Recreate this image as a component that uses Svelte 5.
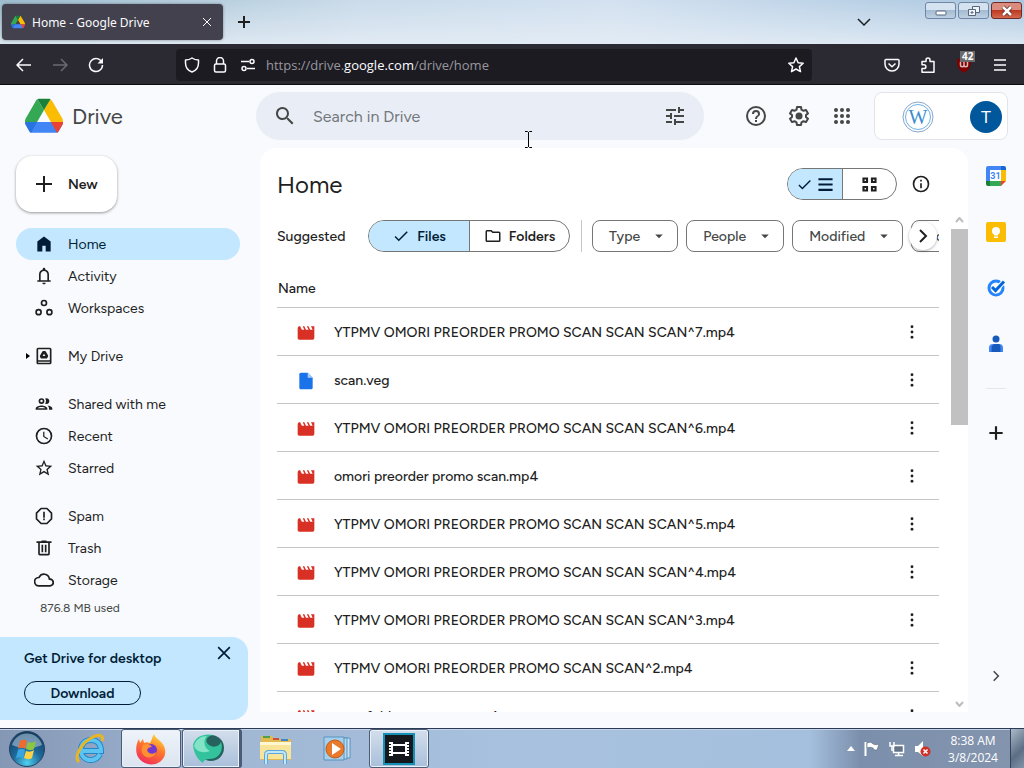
<script>
  const files = [
    { name: 'YTPMV OMORI PREORDER PROMO SCAN SCAN SCAN^7.mp4', kind: 'video' },
    { name: 'scan.veg', kind: 'file' },
    { name: 'YTPMV OMORI PREORDER PROMO SCAN SCAN SCAN^6.mp4', kind: 'video' },
    { name: 'omori preorder promo scan.mp4', kind: 'video' },
    { name: 'YTPMV OMORI PREORDER PROMO SCAN SCAN SCAN^5.mp4', kind: 'video' },
    { name: 'YTPMV OMORI PREORDER PROMO SCAN SCAN SCAN^4.mp4', kind: 'video' },
    { name: 'YTPMV OMORI PREORDER PROMO SCAN SCAN SCAN^3.mp4', kind: 'video' },
    { name: 'YTPMV OMORI PREORDER PROMO SCAN SCAN^2.mp4', kind: 'video' },
    { name: 'scan folder promo sc.mp4', kind: 'video' }
  ];

  const navGroups = [
    ['Home', 'Activity', 'Workspaces'],
    ['My Drive'],
    ['Shared with me', 'Recent', 'Starred'],
    ['Spam', 'Trash', 'Storage']
  ];

  const filters = ['Type', 'People', 'Modified', 'Location'];

  let current = $state('Home');
  let suggested = $state('Files');
  let view = $state('list');
  let query = $state('');
</script>

{#snippet driveLogo(size)}
  <svg width={size} height={size} viewBox="0 0 88 80" aria-hidden="true">
    <path fill="#4285f4" d="M16 79h56c3 0 5-1 6-3l10-19-1-3H1l-1 3 10 19c1 2 3 3 6 3z" />
    <path fill="#34a853" d="M44 26 29 1c-2 1-3 2-4 4L1 47c-1 2-1 5-1 7h28z" />
    <path fill="#fbbc04" d="M44 26 59 1l4 4 24 42c1 2 1 5 1 7H60z" />
    <path fill="#188038" d="M44 26 59 1c-1-1-3-1-5-1H34c-2 0-4 0-5 1z" />
    <path fill="#ea4335" d="M60 54h28c0 2 0 4-1 6l-9 15c-1 2-2 3-4 4z" />
    <path fill="#1967d2" d="M28 54 14 79c-2-1-3-2-4-4L1 60c-1-2-1-4-1-6z" opacity=".6" />
  </svg>
{/snippet}

{#snippet icon(name)}
  <svg class="icon" viewBox="0 0 24 24" aria-hidden="true">
    {#if name == 'Home'}
      <path d="M4 21V9l8-6 8 6v12h-6v-7h-4v7z" />
    {:else if name == 'Activity'}
      <path d="M4 19v-2h2v-7c0-2.800 1.700-5.200 4.500-5.800V3.500a1.500 1.500 0 0 1 3 0v.7C16.300 4.800 18 7.200 18 10v7h2v2zm8 3c-1.100 0-2-.9-2-2h4c0 1.100-.9 2-2 2zm-4-5h8v-7c0-2.200-1.800-4-4-4s-4 1.800-4 4z" />
    {:else if name == 'Workspaces'}
      <g fill="none" stroke="currentColor" stroke-width="2"><circle cx="12" cy="6" r="3" /><circle cx="5.500" cy="17" r="3" /><circle cx="18.500" cy="17" r="3" /></g>
    {:else if name == 'My Drive'}
      <path d="M19 2H5a2 2 0 0 0-2 2v16c0 1.100.9 2 2 2h14a2 2 0 0 0 2-2V4a2 2 0 0 0-2-2zm0 18H5v-1h14zm0-3H5V4h14zM9.200 15h5.600c.5 0 .9-.2 1.100-.7l1-1.700c.2-.4.200-.9 0-1.300l-2.900-4.900A1.500 1.500 0 0 0 12.800 6h-1.600c-.5 0-1 .3-1.200.7l-2.900 4.900c-.2.400-.2.900 0 1.300l1 1.700c.2.300.6.4 1.100.4zm1.200-3L12 9.300l1.600 2.700z" />
    {:else if name == 'Shared with me'}
      <path d="M9 13.800c-2.300 0-7 1.200-7 3.500V19h14v-1.700c0-2.300-4.700-3.500-7-3.500zM4.300 17c.8-.6 2.800-1.300 4.700-1.300s3.900.7 4.700 1.300zM9 12a3.500 3.500 0 1 0 0-7 3.500 3.500 0 0 0 0 7zm0-5a1.500 1.500 0 1 1 0 3 1.500 1.500 0 0 1 0-3zm7 6.800c1.200.8 2 2 2 3.500V19h4v-1.700c0-2-3.500-3.200-6-3.500zM15 12a3.500 3.500 0 1 0-1.500-6.700 5.500 5.500 0 0 1 0 6.300c.4.300.9.400 1.500.4z" />
    {:else if name == 'Recent'}
      <path d="M12 2a10 10 0 1 0 0 20 10 10 0 0 0 0-20zm0 18a8 8 0 1 1 0-16 8 8 0 0 1 0 16zm.5-13H11v6l5.200 3.200.8-1.300-4.500-2.700z" />
    {:else if name == 'Starred'}
      <path d="m22 9.200-7.200-.6L12 2 9.200 8.600 2 9.200l5.500 4.800L5.800 21l6.200-3.700 6.200 3.700-1.600-7zm-10 6.200-3.800 2.300 1-4.300L5.900 10.500l4.400-.4L12 6.100l1.700 4 4.400.4-3.300 2.900 1 4.300z" />
    {:else if name == 'Spam'}
      <path d="M8.500 3h7L21 8.500v7L15.500 21h-7L3 15.500v-7z" fill="none" stroke="currentColor" stroke-width="2" stroke-linejoin="round" /><path d="M11 7h2v7h-2zM11 15h2v2h-2z" />
    {:else if name == 'Trash'}
      <path d="M15 4V3H9v1H3v2h2v13a2 2 0 0 0 2 2h10a2 2 0 0 0 2-2V6h2V4zm2 15H7V6h10zM9 8h2v9H9zm4 0h2v9h-2z" />
    {:else if name == 'Storage'}
      <path d="M19.400 10a7.500 7.500 0 0 0-14-2A6 6 0 0 0 6 20h13a5 5 0 0 0 .4-10zM19 18H6a4 4 0 0 1-.4-8l1-.1.600-1a5.500 5.500 0 0 1 10.200 1.500l.3 1.500 1.500.1A3 3 0 0 1 19 18z" />
    {:else if name == 'search'}
      <path d="M15.500 14h-.8l-.3-.3a6.500 6.500 0 1 0-.7.700l.3.300v.8l5 5 1.500-1.500zm-6 0a4.500 4.500 0 1 1 0-9 4.500 4.500 0 0 1 0 9z" />
    {:else if name == 'tune'}
      <path d="M3 17v2h6v-2zM3 5v2h10V5zm10 16v-2h8v-2h-8v-2h-2v6zM7 9v2H3v2h4v2h2V9zm14 4v-2H11v2zm-6-4h2V7h4V5h-4V3h-2z" />
    {:else if name == 'help'}
      <path d="M11 18h2v-2h-2zm1-16a10 10 0 1 0 0 20 10 10 0 0 0 0-20zm0 18a8 8 0 1 1 0-16 8 8 0 0 1 0 16zm0-14a4 4 0 0 0-4 4h2a2 2 0 1 1 4 0c0 2-3 1.800-3 5h2c0-2.300 3-2.500 3-5a4 4 0 0 0-4-4z" />
    {:else if name == 'settings'}
      <path d="M10 3h4l.5 2.700 2 1.100L19 5.900l2 3.500-2 1.700v1.900l2 1.700-2 3.400-2.500-.9-2 1.200L14 21h-4l-.5-2.600-2-1.200-2.500.9-2-3.400L5 13v-1.900L3 9.400l2-3.500 2.500.9 2-1.100z" fill="none" stroke="currentColor" stroke-width="2" stroke-linejoin="round" /><circle cx="12" cy="12" r="3.500" />
    {:else if name == 'apps'}
      {#each [6, 12, 18] as y}
        {#each [6, 12, 18] as x}<circle cx={x} cy={y} r="2" />{/each}
      {/each}
    {:else if name == 'plus'}
      <path d="M11 4h2v7h7v2h-7v7h-2v-7H4v-2h7z" />
    {:else if name == 'add'}
      <path d="M12 4v16M4 12h16" fill="none" stroke="currentColor" stroke-width="2.600" />
    {:else if name == 'check'}
      <path d="m9 16.200-4.200-4.200-1.400 1.400L9 19 21 7l-1.400-1.400z" />
    {:else if name == 'folder'}
      <path d="M9.200 6l2 2H20v10H4V6zM10 4H4a2 2 0 0 0-2 2v12c0 1.100.9 2 2 2h16a2 2 0 0 0 2-2V8a2 2 0 0 0-2-2h-8z" />
    {:else if name == 'list'}
      <path d="M2 3h20v3H2zM2 10.500h20v3H2zM2 18h20v3H2z" />
    {:else if name == 'grid'}
      <path d="M3.500 3.500h5v5h-5zM15.500 3.500h5v5h-5zM3.500 15.500h5v5h-5zM15.500 15.500h5v5h-5z" fill="none" stroke="currentColor" stroke-width="3" />
    {:else if name == 'info'}
      <path d="M11 7h2v2h-2zm0 4h2v6h-2zm1-9a10 10 0 1 0 0 20 10 10 0 0 0 0-20zm0 18a8 8 0 1 1 0-16 8 8 0 0 1 0 16z" />
    {:else if name == 'caret'}
      <path d="m7 10 5 5 5-5z" />
    {:else if name == 'chevron'}
      <path d="m8 4 8 8-8 8" fill="none" stroke="currentColor" stroke-width="2.600" />
    {:else if name == 'close'}
      <path d="m5 5 14 14M19 5 5 19" fill="none" stroke="currentColor" stroke-width="2" />
    {:else if name == 'more'}
      <circle cx="12" cy="5.700" r="1.700" /><circle cx="12" cy="12" r="1.700" /><circle cx="12" cy="18.300" r="1.700" />
    {:else if name == 'video'}
      <path fill="#d93025" d="m18 4 2 4h-3l-2-4h-2l2 4h-3l-2-4H8l2 4H7L5 4H4a2 2 0 0 0-2 2v12c0 1.100.9 2 2 2h16a2 2 0 0 0 2-2V4z" />
    {:else if name == 'file'}
      <path fill="#1a73e8" d="M14 2H6a2 2 0 0 0-2 2v16c0 1.100.9 2 2 2h12a2 2 0 0 0 2-2V8z" /><path fill="#a9cbfa" d="M14 2v6h6z" />
    {/if}
  </svg>
{/snippet}

<div class="desktop">
  <div class="tabstrip">
    <div class="tab">
      {@render driveLogo(14)}
      <span class="tab-title">Home - Google Drive</span>
      <button class="tab-close" aria-label="Close tab">
        <svg width="10" height="10" viewBox="0 0 10 10"><path d="m1 1 8 8M9 1 1 9" /></svg>
      </button>
    </div>
    <button class="new-tab" aria-label="New tab">
      <svg width="12" height="12" viewBox="0 0 12 12"><path d="M6 0v12M0 6h12" /></svg>
    </button>
    <button class="all-tabs" aria-label="List all tabs">
      <svg width="14" height="8" viewBox="0 0 14 8"><path d="m1 1 6 6 6-6" /></svg>
    </button>
    <div class="window-buttons">
      <button aria-label="Minimize">
        <svg width="16" height="12" viewBox="0 0 16 12"><rect x="3" y="6" width="10" height="4" rx="1" fill="#fff" stroke="#56657a" /></svg>
      </button>
      <button aria-label="Restore">
        <svg width="14" height="14" viewBox="0 0 14 14"><g fill="#eef4fa" stroke="#56657a"><path d="M5.500 2.500h7v6h-7z" /><path d="M1.500 5.500h7v6h-7z" /><path d="M4 8h2v1H4z" /></g></svg>
      </button>
      <button class="win-close" aria-label="Close">
        <svg width="14" height="12" viewBox="0 0 14 12"><path d="m3 2 8 8M11 2l-8 8" fill="none" stroke="#5d2a26" stroke-width="4" /><path d="m3 2 8 8M11 2l-8 8" fill="none" stroke="#fff" stroke-width="2.500" /></svg>
      </button>
    </div>
  </div>

  <div class="toolbar">
    <div class="nav-buttons">
      <button aria-label="Back"><svg viewBox="0 0 16 16"><path d="M15 8H1.500M7 2 1 8l6 6" /></svg></button>
      <button aria-label="Forward" disabled><svg viewBox="0 0 16 16"><path d="M1 8h13.500M9 2l6 6-6 6" /></svg></button>
      <button aria-label="Reload"><svg viewBox="0 0 16 16"><path d="M14 5.500A6.500 6.500 0 1 0 14.500 8" /><path d="M15 1v5.500H9.500z" fill="currentColor" stroke="none" /></svg></button>
    </div>
    <div class="urlbar">
      <svg viewBox="0 0 16 16"><path d="M8 1c2 1.500 4 2 6.500 2v3c0 4-2 7.500-6.500 9C3.500 13.500 1.500 10 1.500 6V3C4 3 6 2.500 8 1z" /></svg>
      <svg viewBox="0 0 16 16"><rect x="2.500" y="7" width="11" height="8" rx="1.500" /><path d="M4.500 7V4a3.500 3.500 0 0 1 7 0v3" /></svg>
      <svg viewBox="0 0 16 16"><path d="M1 4.500h8M7 11.500h8" /><circle cx="12" cy="4.500" r="2" /><circle cx="4" cy="11.500" r="2" /></svg>
      <span class="url">https://drive.<b>google.com</b>/drive/home</span>
      <svg viewBox="0 0 16 16"><path d="m8 1 2.100 4.700 5.100.5-3.800 3.400 1.100 5L8 12l-4.500 2.600 1.100-5L.8 6.200l5.100-.5z" /></svg>
    </div>
    <div class="extensions">
      <button aria-label="Save to Pocket"><svg viewBox="0 0 16 16"><path d="M2 2.500h12c.6 0 1 .4 1 1V7c0 4-3 7-7 7s-7-3-7-7V3.500c0-.6.400-1 1-1z" /><path d="m4.500 6.500 3.500 3.300 3.500-3.300" /></svg></button>
      <button aria-label="Extensions"><svg viewBox="0 0 16 16"><path d="M2 15.200h12V4.500h-4V3a2 2 0 0 0-4 0v1.500H2v3.300h2a1.900 1.900 0 0 1 0 3.800H2z" /></svg></button>
      <button class="ublock" aria-label="uBlock Origin">
        <svg viewBox="0 0 16 16"><path d="M8 0c2 2 5 2 7 2 0 7-1 10-7 14C2 12 1 9 1 2c2 0 5 0 7-2z" fill="#800000" stroke="none" /><path d="M4.500 5v3a1.700 1.700 0 0 0 3.500 0V5v3a1.700 1.700 0 0 0 3.500 0V5" stroke="#d9b8b8" /></svg>
        <span class="count">42</span>
      </button>
      <button aria-label="Menu"><svg viewBox="0 0 16 16"><path d="M2 3h12M2 8h12M2 13h12" /></svg></button>
    </div>
  </div>

  <div class="drive">
    <header>
      <a class="brand" href="#home">{@render driveLogo(38)}<span>Drive</span></a>
      <form class="search" role="search">
        <button type="button" aria-label="Search">{@render icon('search')}</button>
        <input type="text" placeholder="Search in Drive" aria-label="Search in Drive" bind:value={query} />
        <button type="button" aria-label="Advanced search">{@render icon('tune')}</button>
        <svg class="pointer" width="9" height="17" viewBox="0 0 9 17" aria-hidden="true"><path d="M1 .5h2.500l1 1 1-1H8M4.500 1v15M1 16.500h2.500l1-1 1 1H8" /></svg>
      </form>
      <div class="header-actions">
        <button aria-label="Support">{@render icon('help')}</button>
        <button aria-label="Settings">{@render icon('settings')}</button>
        <button aria-label="Google apps">{@render icon('apps')}</button>
      </div>
      <div class="account">
        <svg width="32" height="32" viewBox="0 0 32 32" aria-hidden="true">
          <g fill="none" stroke="#87a5ce"><circle cx="16" cy="16" r="15" /><circle cx="16" cy="16" r="12.500" stroke="#6fb1e4" /></g>
          <text x="16" y="23" text-anchor="middle" font-family="Liberation Serif, serif" font-size="20" fill="#3b8bd0">W</text>
        </svg>
        <button class="avatar" aria-label="Account">T</button>
      </div>
    </header>

    <div class="body">
      <aside>
        <button class="new">{@render icon('plus')}New</button>
        <nav>
          {#each navGroups as group}
            <ul>
              {#each group as item}
                <li>
                  <a href="#{item}" class:active={current == item} onclick={() => (current = item)}>
                    <span class="expand">{#if item == 'My Drive'}<svg width="4" height="6" viewBox="0 0 4 6"><path d="m0 0 4 3-4 3z" /></svg>{/if}</span>
                    {@render icon(item)}
                    {item}
                  </a>
                </li>
              {/each}
            </ul>
          {/each}
        </nav>
        <p class="quota">876.8 MB used</p>
        <div class="promo">
          <div class="promo-text">
            <h2>Get Drive for desktop</h2>
            <button class="download">Download</button>
          </div>
          <button class="dismiss" aria-label="Dismiss">{@render icon('close')}</button>
        </div>
      </aside>

      <main>
        <div class="title-row">
          <h1>Home</h1>
          <div class="segmented view-switch">
            <button class:on={view == 'list'} aria-label="List layout" onclick={() => (view = 'list')}>
              {#if view == 'list'}{@render icon('check')}{/if}
              {@render icon('list')}
            </button>
            <button class:on={view == 'grid'} aria-label="Grid layout" onclick={() => (view = 'grid')}>{@render icon('grid')}</button>
          </div>
          <button class="details" aria-label="View details">{@render icon('info')}</button>
        </div>

        <div class="scroller">
          <div class="content">
            <div class="filters">
              <span class="label">Suggested</span>
              <div class="segmented suggest">
                <button class:on={suggested == 'Files'} onclick={() => (suggested = 'Files')}>{@render icon('check')}Files</button>
                <button class:on={suggested == 'Folders'} onclick={() => (suggested = 'Folders')}>{@render icon('folder')}Folders</button>
              </div>
              <div class="chips">
                {#each filters as filter}
                  <button class="chip">{filter}{@render icon('caret')}</button>
                {/each}
              </div>
              <button class="scroll-chips" aria-label="More filters">{@render icon('chevron')}</button>
            </div>

            <table>
              <thead>
                <tr><th colspan="3">Name</th></tr>
              </thead>
              <tbody>
                {#each files as file}
                  <tr>
                    <td class="kind">{@render icon(file.kind)}</td>
                    <td class="name">{file.name}</td>
                    <td class="menu"><button aria-label="More actions">{@render icon('more')}</button></td>
                  </tr>
                {/each}
              </tbody>
            </table>
          </div>
          <div class="scrollbar" aria-hidden="true">
            <svg width="9" height="6" viewBox="0 0 9 6"><path d="m1 5 3.500-4L8 5" /></svg>
            <div class="track"><div class="thumb"></div></div>
            <svg width="9" height="6" viewBox="0 0 9 6"><path d="m1 1 3.500 4L8 1" /></svg>
          </div>
        </div>
      </main>

      <div class="side-panel">
        <button aria-label="Calendar">
          <svg width="20" height="20" viewBox="0 0 20 20">
            <path fill="#4285f4" d="M2 0h13v4H4v11H0V2a2 2 0 0 1 2-2z" /><path fill="#1967d2" d="M15 0h3a2 2 0 0 1 2 2v2h-5z" /><path fill="#fbbc04" d="M15 4h5v11h-5z" /><path fill="#34a853" d="M4 15h11v5H4z" /><path fill="#188038" d="M0 15h4v5H2a2 2 0 0 1-2-2z" /><path fill="#ea4335" d="M15 15h5l-5 5z" /><path fill="#fff" d="M4 4h11v11H4z" />
            <text x="9.500" y="13" text-anchor="middle" font-family="Roboto, sans-serif" font-size="9" font-weight="700" fill="#4285f4">31</text>
          </svg>
        </button>
        <button aria-label="Keep">
          <svg width="20" height="20" viewBox="0 0 20 20"><rect width="20" height="20" rx="2" fill="#fbbc04" /><circle cx="10" cy="9" r="4" fill="#fff" /><path fill="#fff" d="M8 12h4v1.500H8zM8 14.500h4V16H8z" /></svg>
        </button>
        <button aria-label="Tasks">
          <svg width="20" height="20" viewBox="0 0 20 20"><circle cx="10" cy="10" r="7" fill="none" stroke="#2684fc" stroke-width="3" /><path d="m6.500 9.500 3 3 8-8.500" fill="none" stroke="#fff" stroke-width="5" /><path d="m6 9 3.500 3.500L18 3.500" fill="none" stroke="#0066da" stroke-width="3" /></svg>
        </button>
        <button aria-label="Contacts">
          <svg width="20" height="20" viewBox="0 0 20 20"><circle cx="10" cy="5" r="3.500" fill="#185abc" /><path fill="#4285f4" d="M3 18v-4a4 4 0 0 1 4-4h6a4 4 0 0 1 4 4v4z" /><path fill="#185abc" d="M5.500 18v-3a5 5 0 0 1 3-5H13a4 4 0 0 1 1.500 3.500V18z" /></svg>
        </button>
        <hr />
        <button class="addons" aria-label="Get add-ons">{@render icon('add')}</button>
        <button class="hide-panel" aria-label="Hide side panel">{@render icon('chevron')}</button>
      </div>
    </div>
  </div>

  <div class="taskbar">
    <button class="start" aria-label="Start">
      <svg width="38" height="38" viewBox="0 0 38 38">
        <defs>
          <radialGradient id="orb" cx=".5" cy=".9" r=".9"><stop offset="0" stop-color="#4fd0ee" /><stop offset=".45" stop-color="#1f6a9c" /><stop offset="1" stop-color="#123a5e" /></radialGradient>
        </defs>
        <circle cx="19" cy="19" r="17.500" fill="url(#orb)" stroke="#27415f" />
        <path d="M4 15a15.500 15.500 0 0 1 30 0c-8 4-22 4-30 0z" fill="#c9dcec" opacity=".5" />
        <path fill="#ef6a2e" d="M12 11c3-2 5-1 7 0l-2 8c-2-1-4-2-7 0z" />
        <path fill="#8cc63e" d="M20 12c3 1 5 1 8-1l-2 8c-3 2-5 1-8 0z" />
        <path fill="#38a4e0" d="M10 20c3-2 5-1 7 0l-2 8c-2-1-4-1-7 0z" />
        <path fill="#fcd245" d="M18 21c3 1 5 1 8-1l-2 8c-3 2-5 1-8 0z" />
      </svg>
    </button>
    <button class="task ie" aria-label="Internet Explorer">
      <svg width="32" height="32" viewBox="0 0 32 32">
        <path d="M26 21c-2 4-5 6-9 6-6 0-10-4-10-10S11 7 17 7s10 4 10 11H8" fill="none" stroke="#2386c8" stroke-width="6" />
        <path d="M26 21c-2 4-5 6-9 6-6 0-10-4-10-10S11 7 17 7s10 4 10 11H8" fill="none" stroke="#5dc4f1" stroke-width="4" />
        <path d="M5 29C-1 24 8 9 19 4c6-3 11-2 9 4" fill="none" stroke="#e8b523" stroke-width="3" />
      </svg>
    </button>
    <button class="task running front" aria-label="Firefox">
      <svg width="32" height="32" viewBox="0 0 32 32">
        <defs><linearGradient id="fox" x1=".8" y1="0" x2=".3" y2="1"><stop offset="0" stop-color="#ffe33f" /><stop offset=".45" stop-color="#ff7a2a" /><stop offset="1" stop-color="#f02c5c" /></linearGradient></defs>
        <path fill="url(#fox)" d="M19 1c1 4 5 5 8 9 5 6 4 14-1 18-7 6-18 4-23-4C0 18 1 11 4 6l1 4 3-4 1 4c2-1 4-1 6 0 2-3 2-6 4-9z" />
        <circle cx="16" cy="17" r="6" fill="#7338d0" /><path fill="#ff9130" d="M8 12c4-2 7-1 9 2-3 0-4 1-5 3 1 4 6 5 9 2-1 6-10 8-14 1-1-3 0-6 1-8z" />
      </svg>
    </button>
    <button class="task running stacked" aria-label="Bird app">
      <svg width="32" height="32" viewBox="0 0 32 32">
        <circle cx="18" cy="15" r="13" fill="#26635f" />
        <path fill="#33c39c" d="M0 12C2 3 12 0 20 2c-5 1-8 4-6 8 5 6 12 4 14-1 3 8-2 17-11 17-4 0-6 1-7 4C4 26 1 20 0 12z" />
        <path fill="#82e3c6" d="M1 13C3 6 8 3 14 3c-5 5-2 13 3 15-8 3-14 0-16-5z" />
      </svg>
    </button>
    <button class="task" aria-label="Windows Explorer">
      <svg width="34" height="32" viewBox="0 0 34 32">
        <path fill="#e2b84f" d="M2 3h11l2 3h17v21H2z" /><path fill="#4ea04a" d="M4 3h7v2H4z" /><path fill="#c9503c" d="M14 5h6v2h-6z" /><path fill="#3f86c6" d="M22 6h7v2h-7z" />
        <path fill="#f8e59a" d="M1 9h31v17H1z" /><path fill="#fff7cf" d="M1 9h31v3H1z" />
        <path fill="none" stroke="#5ba8dc" stroke-width="4" d="M7 31v-9c0-2 1-3 3-3h13c2 0 3 1 3 3v9" /><path fill="none" stroke="#c1e6fa" stroke-width="2" d="M7 31v-9c0-2 1-3 3-3h13c2 0 3 1 3 3v9" />
      </svg>
    </button>
    <button class="task" aria-label="Windows Media Player">
      <svg width="28" height="28" viewBox="0 0 28 28">
        <path fill="#cce4f4" stroke="#5692be" d="M9 3h18v20H9z" /><path fill="#b3d8f0" stroke="#5692be" d="M6 3h18v21H6z" /><path fill="#a5d0ed" stroke="#5692be" d="M1 2h20v23H1z" />
        <circle cx="12" cy="14" r="9" fill="#e9792b" stroke="#c25c1c" /><path fill="#fff" d="m9 8 9 6-9 6z" />
      </svg>
    </button>
    <button class="task running vegas" aria-label="VEGAS">
      <svg width="32" height="32" viewBox="0 0 32 32">
        <path fill="#15191e" stroke="#1590b5" stroke-width="2" d="M1 1h30v30H1z" />
        <path fill="none" stroke="#fff" stroke-width="2" d="M9 12h14v8H9z" /><path fill="none" stroke="#fff" stroke-width="4" stroke-dasharray="2 1" d="M8 9v14M24 9v14" />
      </svg>
    </button>
    <div class="tray">
      <svg width="8" height="5" viewBox="0 0 8 5"><path fill="#fff" d="m4 0 4 5H0z" /></svg>
      <svg width="16" height="16" viewBox="0 0 16 16"><path d="M1.500 1v14" stroke="#fff" stroke-width="2" /><path fill="#fff" stroke="#46566a" stroke-width=".5" d="M3 2c3-1 4-1 6 1 2 1 4 1 6 0l-2 6c-2 0-3 0-4-2-2-1-4-1-6 0z" /></svg>
      <svg width="16" height="16" viewBox="0 0 16 16"><path d="M4.500 4.500h10v7h-10zM9.500 12v3M6 14.500h8" fill="#64758a" stroke="#fff" stroke-width="1.500" /><path d="M1 1v4h4V1M3 5v5" fill="none" stroke="#fff" stroke-width="1.500" /></svg>
      <svg width="17" height="16" viewBox="0 0 17 16"><path fill="#fff" d="M1 5h3l5-5v15l-5-4H1z" /><circle cx="11.500" cy="10.500" r="5" fill="#cf3028" /><path d="m9.500 8.500 4 4M13.500 8.500l-4 4" stroke="#fff" stroke-width="1.500" /></svg>
      <div class="clock"><span>8:38 AM</span><span>3/8/2024</span></div>
    </div>
    <button class="show-desktop" aria-label="Show desktop"></button>
  </div>
</div>

<style>
  :global(body) {
    margin: 0;
  }

  .desktop {
    display: flex;
    flex-direction: column;
    height: 100vh;
    overflow: hidden;
    font-family: "Open Sans", "Noto Sans", sans-serif;
    color: #1f1f1f;
  }

  button {
    display: flex;
    align-items: center;
    justify-content: center;
    padding: 0;
    border: 0;
    background: none;
    color: inherit;
    font: inherit;
    cursor: pointer;
  }

  svg {
    display: block;
    flex: none;
  }

  .icon {
    width: 20px;
    height: 20px;
    fill: currentColor;
  }

  /* browser chrome */
  .tabstrip {
    display: flex;
    flex: none;
    height: 44px;
    background: linear-gradient(to bottom, rgba(255, 255, 255, 0), rgba(230, 238, 246, 0.8)), linear-gradient(to right, #9dbdce, #cadbea 35%, #d3e1f0 60%, #a9c6df);
  }

  .tab {
    display: flex;
    align-items: center;
    gap: 7px;
    width: 221px;
    height: 36px;
    margin: 4px 0 0 2px;
    padding: 0 11px 0 9px;
    box-sizing: border-box;
    border-radius: 4px;
    background: #42414d;
    box-shadow: 0 0 3px rgba(0, 0, 0, 0.4);
    color: #fbfbfe;
    font-family: "Noto Sans", "Open Sans", sans-serif;
    font-size: 12px;
  }

  .tab-title {
    flex: 1;
  }

  .tab-close,
  .new-tab,
  .all-tabs {
    fill: none;
    stroke: currentColor;
  }

  .new-tab {
    margin-left: 15px;
    stroke-width: 2;
  }

  .all-tabs {
    margin-left: auto;
    margin-right: 54px;
    stroke-width: 1.5;
  }

  .window-buttons {
    display: flex;
    gap: 2px;
    margin: 2px 2px 0 0;
  }

  .window-buttons button {
    width: 31px;
    height: 17px;
    border: 1px solid #6f87a4;
    border-radius: 3px;
    box-sizing: border-box;
    background: linear-gradient(to bottom, #d5e2ef 45%, #a5bbd3 50%, #bfd0e2);
  }

  .window-buttons .win-close {
    border-color: #6d2a29;
    background: linear-gradient(to bottom, #dc8c7d 45%, #bd3a22 50%, #d4694d);
  }

  .toolbar {
    display: flex;
    flex: none;
    align-items: center;
    height: 41px;
    padding-top: 1px;
    box-sizing: border-box;
    border-bottom: 1px solid #0c0c0d;
    background: #2b2a33;
    color: #fbfbfe;
  }

  .toolbar svg {
    width: 16px;
    height: 16px;
    fill: none;
    stroke: currentColor;
    stroke-width: 1.5;
    stroke-linejoin: round;
  }

  .nav-buttons,
  .extensions {
    display: flex;
    gap: 20px;
    padding: 0 16px;
  }

  .nav-buttons button:disabled {
    color: #6a6973;
  }

  .urlbar {
    display: flex;
    flex: 1;
    align-items: center;
    gap: 12px;
    height: 32px;
    margin: 0 56px;
    padding: 0 8px;
    border-radius: 4px;
    background: #1c1b22;
  }

  .url {
    flex: 1;
    margin-left: -2px;
    color: #98979f;
    font-size: 13px;
  }

  .url b {
    color: #fbfbfe;
    font-weight: 400;
  }

  .ublock {
    position: relative;
  }

  .ublock .count {
    position: absolute;
    top: -6px;
    left: 4px;
    padding: 0 2px;
    background: #6b6b6b;
    font-size: 10px;
    font-weight: 700;
    line-height: 11px;
  }

  /* drive page */
  .drive {
    display: flex;
    flex: 1;
    flex-direction: column;
    min-height: 0;
    background: #f8fafd;
    font-family: Figtree, Inter, Roboto, sans-serif;
    font-size: 14px;
  }

  header {
    display: flex;
    flex: none;
    align-items: flex-start;
    height: 63px;
    padding: 7px 16px 0 0;
    box-sizing: border-box;
    color: #444746;
  }

  .brand {
    display: flex;
    align-items: center;
    gap: 9px;
    width: 256px;
    height: 48px;
    padding-left: 25px;
    box-sizing: border-box;
    color: #444746;
    font-size: 22px;
    text-decoration: none;
  }

  .search {
    position: relative;
    display: flex;
    flex: 1;
    align-items: center;
    gap: 16px;
    height: 48px;
    padding: 0 17px;
    border-radius: 24px;
    background: #e9eef6;
  }

  .search .icon,
  .header-actions .icon {
    width: 24px;
    height: 24px;
  }

  .search input {
    flex: 1;
    min-width: 0;
    padding: 0;
    border: 0;
    outline: 0;
    background: none;
    color: #1f1f1f;
    font: inherit;
    font-size: 16px;
  }

  .search input::placeholder {
    color: #74777b;
  }

  .search .pointer {
    position: absolute;
    top: 39px;
    left: 268px;
    fill: none;
    stroke: #000;
  }

  .header-actions {
    display: flex;
    align-items: center;
    gap: 19px;
    height: 48px;
    padding: 0 20px 0 40px;
  }

  .account {
    display: flex;
    align-items: center;
    justify-content: flex-end;
    gap: 36px;
    width: 134px;
    height: 48px;
    padding: 1px 5px 0 0;
    box-sizing: border-box;
    border: 1px solid #e1e5ea;
    border-radius: 8px;
    background: #fff;
  }

  .avatar {
    width: 32px;
    height: 32px;
    border-radius: 50%;
    background: #01579b;
    color: #fff;
    font-size: 18px;
  }

  .body {
    display: flex;
    flex: 1;
    min-height: 0;
  }

  aside {
    display: flex;
    flex: none;
    flex-direction: column;
    width: 248px;
    margin-right: 12px;
    padding: 8px 0;
    box-sizing: border-box;
  }

  .new {
    justify-content: flex-start;
    gap: 12px;
    width: 101px;
    height: 56px;
    margin: 0 0 16px 16px;
    padding-left: 16px;
    border-radius: 16px;
    background: #fff;
    box-shadow: 0 1px 3px rgba(0, 0, 0, 0.4);
    font-weight: 600;
  }

  .new .icon {
    width: 24px;
    height: 24px;
  }

  nav {
    display: flex;
    flex-direction: column;
    gap: 16px;
    padding: 0 8px 0 16px;
  }

  ul {
    margin: 0;
    padding: 0;
    list-style: none;
  }

  nav a {
    display: flex;
    align-items: center;
    height: 32px;
    border-radius: 16px;
    color: #1f1f1f;
    text-decoration: none;
  }

  nav a .icon {
    margin-right: 14px;
  }

  nav a.active {
    background: #c2e7ff;
    color: #001d35;
  }

  .expand {
    display: flex;
    width: 8px;
    padding-left: 10px;
  }

  .quota {
    margin: 4px 0 0 40px;
    color: #444746;
    font-size: 12px;
    line-height: 16px;
  }

  .promo {
    display: flex;
    align-items: flex-start;
    justify-content: space-between;
    height: 83px;
    margin-top: auto;
    padding: 12px 14px 0 24px;
    box-sizing: border-box;
    border-radius: 0 16px 16px 0;
    background: #c2e7ff;
    color: #001d35;
  }

  .promo h2 {
    margin: 0 0 12px;
    font-size: 14px;
    font-weight: 600;
    line-height: 20px;
  }

  .download {
    width: 117px;
    height: 24px;
    border: 1px solid #001d35;
    border-radius: 12px;
    font-weight: 600;
  }

  .dismiss {
    margin-top: -6px;
  }

  main {
    display: flex;
    flex: 1;
    flex-direction: column;
    min-width: 0;
    margin-bottom: 16px;
    border-radius: 16px 16px 0 0;
    background: #fff;
  }

  .title-row {
    display: flex;
    flex: none;
    align-items: center;
    height: 64px;
    padding: 8px 37px 0 17px;
    box-sizing: border-box;
  }

  h1 {
    flex: 1;
    margin: 0;
    font-size: 24px;
    font-weight: 400;
  }

  .segmented {
    display: flex;
    height: 32px;
    box-sizing: border-box;
    border: 1px solid #747775;
    border-radius: 16px;
    overflow: hidden;
  }

  .segmented button + button {
    border-left: 1px solid #747775;
  }

  .segmented .on {
    background: #c2e7ff;
    color: #001d35;
  }

  .view-switch button {
    width: 54px;
    gap: 4px;
  }

  .view-switch .icon {
    width: 17px;
    height: 17px;
  }

  .details {
    margin-left: 14px;
  }

  .scroller {
    display: flex;
    flex: 1;
    min-height: 0;
  }

  .content {
    flex: 1;
    min-width: 0;
    padding: 8px 12px 0 17px;
    overflow: hidden;
  }

  .filters {
    position: relative;
    display: flex;
    align-items: center;
    height: 32px;
    font-weight: 500;
  }

  .filters .icon {
    width: 18px;
    height: 18px;
  }

  .label {
    width: 91px;
    flex: none;
  }

  .suggest {
    flex: none;
    font-weight: 600;
  }

  .suggest button {
    gap: 7px;
    width: 100px;
  }

  .chips {
    display: flex;
    flex: 1;
    gap: 8px;
    min-width: 0;
    height: 32px;
    margin-left: 11px;
    padding-left: 10px;
    border-left: 1px solid #c4c7c5;
    overflow: hidden;
  }

  .chip {
    flex: none;
    gap: 10px;
    height: 32px;
    padding: 0 9px 0 16px;
    box-sizing: border-box;
    border: 1px solid #747775;
    border-radius: 8px;
    color: #444746;
  }

  .scroll-chips {
    position: absolute;
    top: 2px;
    right: 2px;
    width: 28px;
    height: 28px;
    border-radius: 50%;
    background: #fff;
    box-shadow: 0 1px 3px rgba(0, 0, 0, 0.3);
  }

  table {
    width: 100%;
    margin-top: 16px;
    border-collapse: collapse;
    font-weight: 500;
  }

  th {
    height: 37px;
    padding: 2px 1px 0;
    text-align: left;
    font-weight: 500;
  }

  td {
    height: 47px;
    padding: 0;
  }

  tr {
    border-bottom: 1px solid #c4c7c5;
  }

  .kind,
  .name {
    height: 45px;
    padding-top: 2px;
  }

  .kind {
    width: 57px;
  }

  .kind .icon {
    margin-left: 19px;
  }

  .menu {
    width: 37px;
  }

  .scrollbar {
    display: flex;
    flex: none;
    flex-direction: column;
    align-items: center;
    width: 17px;
    padding: 5px 0;
    fill: none;
    stroke: #bdbdbd;
    stroke-width: 2;
  }

  .track {
    flex: 1;
    width: 100%;
    margin: 6px 0;
  }

  .thumb {
    height: 42%;
    background: #c1c1c1;
  }

  .side-panel {
    display: flex;
    flex: none;
    flex-direction: column;
    align-items: center;
    gap: 36px;
    width: 56px;
    padding: 18px 0 44px;
    box-sizing: border-box;
  }

  .side-panel hr {
    width: 20px;
    margin: -2px 0;
    border: 0;
    border-top: 1px solid #e4e7eb;
  }

  .hide-panel {
    margin-top: auto;
    color: #444746;
  }

  .hide-panel .icon {
    width: 14px;
    height: 16px;
  }

  /* windows taskbar */
  .taskbar {
    display: flex;
    flex: none;
    height: 40px;
    box-sizing: border-box;
    border-top: 1px solid #2c3a55;
    background: linear-gradient(to right, #8497b5, #a0b6d3 20%, #a7c1de 50%, #a5c0de 79%, #7b8fac 84%, #8494ad);
    box-shadow: inset 0 1px #c5d5e7;
  }

  .start {
    width: 54px;
  }

  .task {
    width: 60px;
    margin-right: 1px;
    padding-left: 6px;
    box-sizing: border-box;
  }

  .ie {
    width: 66px;
  }

  .running {
    padding: 0;
    border: 1px solid #4b5c77;
    border-radius: 3px;
    background: linear-gradient(to bottom, #d3deec, #a9bfda);
    box-shadow: inset 0 0 0 1px #eaf1f8;
  }

  .front {
    background: linear-gradient(to bottom, #eef3f9, #dbe4ef);
  }

  .stacked {
    padding-right: 4px;
    border-right-width: 3px;
  }

  .vegas {
    margin-left: 4px;
  }

  .tray {
    display: flex;
    align-items: center;
    gap: 9px;
    margin-left: auto;
    color: #fff;
    font-family: "Open Sans", "Noto Sans", sans-serif;
    font-size: 12px;
    line-height: 17px;
  }

  .clock {
    display: flex;
    flex-direction: column;
    align-items: center;
    width: 60px;
    margin: 0 7px 0 3px;
  }

  .show-desktop {
    width: 14px;
    border-left: 1px solid #33435b;
    background: linear-gradient(135deg, #adbac8, #5a6e85 60%, #8494a8);
  }
</style>
